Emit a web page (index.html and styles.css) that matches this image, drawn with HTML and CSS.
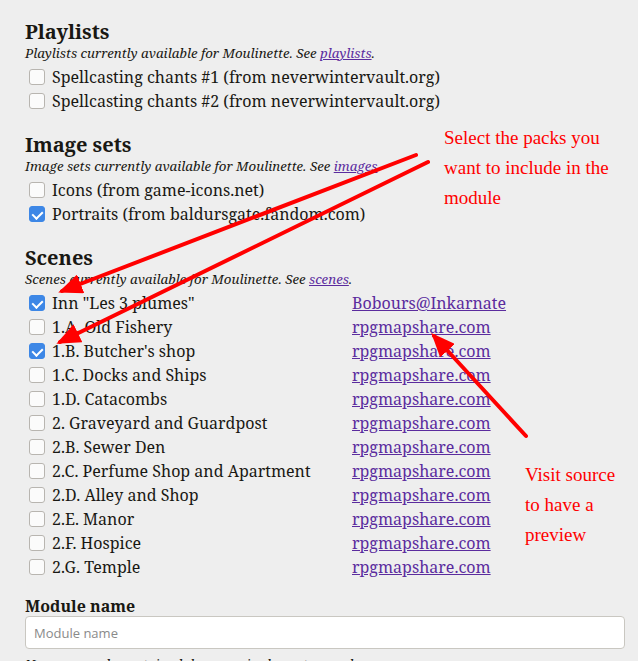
FILE: index.html
```html
<!DOCTYPE html>
<html>
<head>
<meta charset="utf-8">
<link rel="stylesheet" href="styles.css">
</head>
<body>
<div class="page">
  <section class="group">
    <h2 class="group-title">Playlists</h2>
    <p class="hint">Playlists currently available for Moulinette. See <a href="#">playlists</a>.</p>
    <label class="row"><input type="checkbox" class="box"><span>Spellcasting chants #1 (from neverwintervault.org)</span></label>
    <label class="row"><input type="checkbox" class="box"><span>Spellcasting chants #2 (from neverwintervault.org)</span></label>
  </section>

  <section class="group">
    <h2 class="group-title">Image sets</h2>
    <p class="hint">Image sets currently available for Moulinette. See <a href="#">images</a>.</p>
    <label class="row"><input type="checkbox" class="box"><span>Icons (from game-icons.net)</span></label>
    <label class="row"><input type="checkbox" class="box" checked><span>Portraits (from baldursgate.fandom.com)</span></label>
  </section>

  <section class="group scenes">
    <h2 class="group-title">Scenes</h2>
    <p class="hint">Scenes currently available for Moulinette. See <a href="#">scenes</a>.</p>
    <div class="scene-list">
      <label class="row"><input type="checkbox" class="box" checked><span>Inn "Les 3 plumes"</span></label><a href="#" class="src">Bobours@Inkarnate</a>
      <label class="row"><input type="checkbox" class="box"><span>1.A. Old Fishery</span></label><a href="#" class="src">rpgmapshare.com</a>
      <label class="row"><input type="checkbox" class="box" checked><span>1.B. Butcher's shop</span></label><a href="#" class="src">rpgmapshare.com</a>
      <label class="row"><input type="checkbox" class="box"><span>1.C. Docks and Ships</span></label><a href="#" class="src">rpgmapshare.com</a>
      <label class="row"><input type="checkbox" class="box"><span>1.D. Catacombs</span></label><a href="#" class="src">rpgmapshare.com</a>
      <label class="row"><input type="checkbox" class="box"><span>2. Graveyard and Guardpost</span></label><a href="#" class="src">rpgmapshare.com</a>
      <label class="row"><input type="checkbox" class="box"><span>2.B. Sewer Den</span></label><a href="#" class="src">rpgmapshare.com</a>
      <label class="row"><input type="checkbox" class="box"><span>2.C. Perfume Shop and Apartment</span></label><a href="#" class="src">rpgmapshare.com</a>
      <label class="row"><input type="checkbox" class="box"><span>2.D. Alley and Shop</span></label><a href="#" class="src">rpgmapshare.com</a>
      <label class="row"><input type="checkbox" class="box"><span>2.E. Manor</span></label><a href="#" class="src">rpgmapshare.com</a>
      <label class="row"><input type="checkbox" class="box"><span>2.F. Hospice</span></label><a href="#" class="src">rpgmapshare.com</a>
      <label class="row"><input type="checkbox" class="box"><span>2.G. Temple</span></label><a href="#" class="src">rpgmapshare.com</a>
    </div>
  </section>

  <section class="group module">
    <h3 class="field-title">Module name</h3>
    <input type="text" class="field" placeholder="Module name">
    <p class="hint">Name can only contain alphanumeric characters and spaces.</p>
  </section>
</div>

<div class="note note-select">Select the packs you<br>want to include in the<br>module</div>
<div class="note note-visit">Visit source<br>to have a<br>preview</div>

<svg class="arrows" width="638" height="661" viewBox="0 0 638 661">
  <defs>
    <marker id="head" markerWidth="6" markerHeight="5" refX="5" refY="2.5" orient="auto" markerUnits="strokeWidth">
      <path d="M0,0 L6,2.5 L0,5 Z" fill="#ff0000"/>
    </marker>
  </defs>
  <line x1="416" y1="155" x2="62" y2="291" stroke="#ff0000" stroke-width="4" stroke-linecap="round" marker-end="url(#head)"/>
  <line x1="428" y1="162" x2="60" y2="342" stroke="#ff0000" stroke-width="4" stroke-linecap="round" marker-end="url(#head)"/>
  <line x1="526" y1="436" x2="434" y2="336" stroke="#ff0000" stroke-width="4" stroke-linecap="round" marker-end="url(#head)"/>
</svg>
</body>
</html>
```

FILE: styles.css
```css
html, body {
  margin: 0;
  padding: 0;
  background: #eeeeee;
  height: 661px;
  overflow: hidden;
}

body {
  position: relative;
  font-family: "Noto Serif", "DejaVu Serif", serif;
  color: #191813;
}

.page {
  padding: 20px 13px 0 25px;
}

.group {
  margin-bottom: 20px;
}

.scenes {
  margin-bottom: 17px;
}

.group-title {
  font-size: 20px;
  font-weight: bold;
  margin: 0;
  line-height: 24px;
}

.hint {
  font-style: italic;
  font-size: 13.3px;
  margin: 0 0 3px 0;
  line-height: 18px;
}

.hint a,
.src {
  color: #5b2c9e;
}

.row {
  display: flex;
  align-items: center;
  gap: 7px;
  font-size: 16px;
  height: 24px;
  line-height: 24px;
}

.box {
  appearance: none;
  -webkit-appearance: none;
  width: 16px;
  height: 16px;
  margin: 0 0 0 4px;
  border: 1px solid #b8b5b0;
  border-radius: 3px;
  background: #fbfbfb;
  flex: none;
  position: relative;
}

.box:checked {
  background: #3d87e6;
  border-color: #3d87e6;
}

.box:checked::after {
  content: "";
  position: absolute;
  left: 3.5px;
  top: 1.5px;
  width: 5px;
  height: 8px;
  border: solid #ffffff;
  border-width: 0 2.5px 2.5px 0;
  transform: rotate(45deg);
}

.scene-list {
  display: grid;
  grid-template-columns: 327px auto;
  justify-content: start;
}

.src {
  font-size: 16px;
  line-height: 24px;
}

.module {
  margin-top: 0;
}

.field-title {
  font-size: 16px;
  font-weight: bold;
  margin: 0;
  line-height: 20px;
}

.field {
  display: block;
  box-sizing: border-box;
  width: 600px;
  height: 33px;
  border: 1px solid #c9c7c1;
  border-radius: 4px;
  background: #ffffff;
  padding: 0 8px;
  font-family: "Open Sans", "Noto Sans", sans-serif;
  font-size: 13px;
  margin-bottom: 6px;
}

.field::placeholder {
  color: #8a8a8a;
}

.note {
  position: absolute;
  font-family: "Liberation Serif", "Times New Roman", serif;
  font-size: 19px;
  line-height: 30px;
  color: #ff0000;
}

.note-select {
  left: 444px;
  top: 123px;
}

.note-visit {
  left: 525px;
  top: 460px;
}

.arrows {
  position: absolute;
  left: 0;
  top: 0;
  pointer-events: none;
}
```
